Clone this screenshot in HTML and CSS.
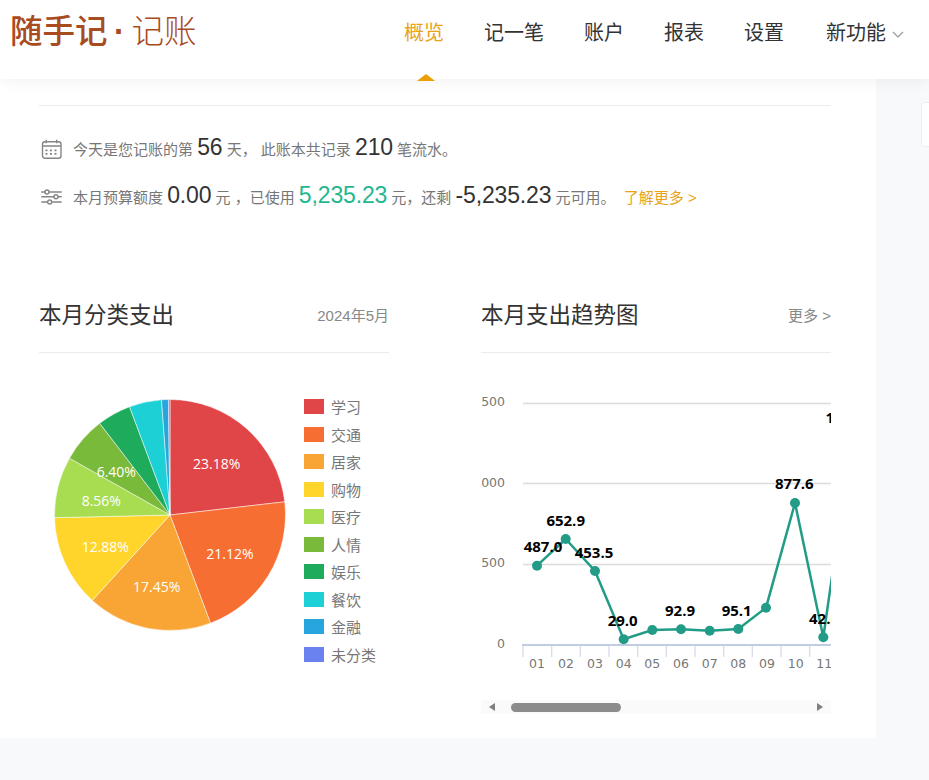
FILE: index.html
```html
<!DOCTYPE html>
<html lang="zh-CN">
<head>
    <meta charset="UTF-8">
    <meta name="viewport" content="width=device-width, initial-scale=1.0">
    <title>随手记 · 记账</title>
    <link rel="stylesheet" href="styles.css">
</head>
<body>

    <header class="header">
        <div class="logo"><span class="logo-main">随手记</span><span class="logo-dot">·</span><span class="logo-sub">记账</span></div>
        <nav class="nav">
            <a class="nav-item active">概览</a>
            <a class="nav-item">记一笔</a>
            <a class="nav-item">账户</a>
            <a class="nav-item">报表</a>
            <a class="nav-item">设置</a>
            <a class="nav-item nav-more">新功能
                <svg class="chevron" width="12" height="7" viewBox="0 0 12 7"><path d="M1 1l5 5 5-5"/></svg>
            </a>
        </nav>
    </header>

    <div class="side-tab"></div>

    <main class="panel">
        <section class="stats">
            <div class="stat-row">
                <svg class="stat-icon" width="22" height="20" viewBox="0 0 22 20">
                    <rect x="1.500" y="2.700" width="18.500" height="16.600" rx="2.500"/>
                    <path d="M1.500 7h18.500M5.200 .8v3.500M15.700 .8v3.500"/>
                    <path class="dots" d="M4.500 10.500h2v1.700h-2zM9 10.500h2v1.700H9zM13.500 10.500h2v1.700h-2zM4.500 14h2v1.700h-2zM9 14h2v1.700H9zM13.500 14h2v1.700h-2z"/>
                </svg>
                <p>今天是您记账的第 <b>56</b> 天， 此账本共记录 <b>210</b> 笔流水。</p>
            </div>
            <div class="stat-row">
                <svg class="stat-icon" width="22" height="20" viewBox="0 0 22 20">
                    <path d="M.3 5h20.400M.3 9.700h20.400M.3 15h20.400"/>
                    <circle class="knob" cx="6" cy="5" r="2"/>
                    <circle class="knob" cx="15" cy="9.700" r="2"/>
                    <circle class="knob" cx="8.700" cy="15" r="2"/>
                </svg>
                <p>本月预算额度 <b>0.00</b> 元 ，已使用 <b class="green">5,235.23</b> 元，还剩 <b>-5,235.23</b> 元可用。 <a class="more-link">了解更多 &gt;</a></p>
            </div>
        </section>

        <section class="charts">
            <div class="chart">
                <div class="chart-head">
                    <h2>本月分类支出</h2>
                    <span class="chart-note">2024年5月</span>
                </div>
                <div class="pie-wrap">
                    <svg class="pie" width="250" height="260" viewBox="39 385 250 260">
                        <path fill="#e04648" d="M170 515L170 399.500A115.500 115.500 0 0 1 284.740 501.820Z"/>
                        <path fill="#f76e32" d="M170 515L284.740 501.820A115.500 115.500 0 0 1 210.480 623.170Z"/>
                        <path fill="#f8a535" d="M170 515L210.480 623.170A115.500 115.500 0 0 1 92.270 600.430Z"/>
                        <path fill="#ffd52b" d="M170 515L92.270 600.430A115.500 115.500 0 0 1 54.530 517.690Z"/>
                        <path fill="#a8dd52" d="M170 515L54.530 517.690A115.500 115.500 0 0 1 69.450 458.160Z"/>
                        <path fill="#7aba3a" d="M170 515L69.450 458.160A115.500 115.500 0 0 1 99.730 423.340Z"/>
                        <path fill="#1eab5c" d="M170 515L99.730 423.340A115.500 115.500 0 0 1 129.580 406.800Z"/>
                        <path fill="#1dd0d6" d="M170 515L129.580 406.800A115.500 115.500 0 0 1 161.520 399.810Z"/>
                        <path fill="#26a6dc" d="M170 515L161.520 399.810A115.500 115.500 0 0 1 168.400 399.510Z"/>
                        <path fill="#6a82ee" d="M170 515L168.400 399.510A115.500 115.500 0 0 1 170 399.500Z"/>
                        <text x="216.700" y="468.500">23.18%</text>
                        <text x="230" y="558.500">21.12%</text>
                        <text x="156.700" y="591.500">17.45%</text>
                        <text x="105.300" y="551.500">12.88%</text>
                        <text x="101.300" y="505.500">8.56%</text>
                        <text x="116.300" y="476.500">6.40%</text>
                    </svg>
                    <ul class="legend">
                        <li><i class="c-study"></i>学习</li>
                        <li><i class="c-traffic"></i>交通</li>
                        <li><i class="c-home"></i>居家</li>
                        <li><i class="c-shop"></i>购物</li>
                        <li><i class="c-medical"></i>医疗</li>
                        <li><i class="c-gift"></i>人情</li>
                        <li><i class="c-fun"></i>娱乐</li>
                        <li><i class="c-food"></i>餐饮</li>
                        <li><i class="c-finance"></i>金融</li>
                        <li><i class="c-none"></i>未分类</li>
                    </ul>
                </div>
            </div>

            <div class="chart">
                <div class="chart-head">
                    <h2>本月支出趋势图</h2>
                    <a class="chart-note">更多 &gt;</a>
                </div>
                <svg class="trend" width="350" height="290" viewBox="481 385 350 290">
                    <path class="grid" d="M523 403.500H831M523 483.500H831M523 564.500H831"/>
                    <path class="ticks" d="M523 645v12M551.700 645v12M580.300 645v12M609 645v12M637.700 645v12M666.300 645v12M695 645v12M723.700 645v12M752.300 645v12M781 645v12M809.700 645v12"/>
                    <path class="axis" d="M522 645H831"/>
                    <text class="y-label" x="505" y="406">1500</text>
                    <text class="y-label" x="505" y="487">1000</text>
                    <text class="y-label" x="505" y="567">500</text>
                    <text class="y-label" x="505" y="648">0</text>
                    <text class="x-label" x="537" y="668">01</text>
                    <text class="x-label" x="566" y="668">02</text>
                    <text class="x-label" x="595" y="668">03</text>
                    <text class="x-label" x="623.700" y="668">04</text>
                    <text class="x-label" x="652.300" y="668">05</text>
                    <text class="x-label" x="681" y="668">06</text>
                    <text class="x-label" x="709.700" y="668">07</text>
                    <text class="x-label" x="738.300" y="668">08</text>
                    <text class="x-label" x="767" y="668">09</text>
                    <text class="x-label" x="795.700" y="668">10</text>
                    <text class="x-label" x="824.300" y="668">11</text>
                    <polyline class="line" points="537,565.700 565.700,539 595,571 623.700,639.300 652.300,630 681,629.300 709.700,630.700 738.300,629 766,607.700 795,503 823.300,637.300 852,437"/>
                    <g class="points">
                        <circle cx="537" cy="565.700" r="5"/>
                        <circle cx="565.700" cy="539" r="5"/>
                        <circle cx="595" cy="571" r="5"/>
                        <circle cx="623.700" cy="639.300" r="5"/>
                        <circle cx="652.300" cy="630" r="5"/>
                        <circle cx="681" cy="629.300" r="5"/>
                        <circle cx="709.700" cy="630.700" r="5"/>
                        <circle cx="738.300" cy="629" r="5"/>
                        <circle cx="766" cy="607.700" r="5"/>
                        <circle cx="795" cy="503" r="5"/>
                        <circle cx="823.300" cy="637.300" r="5"/>
                    </g>
                    <g class="values">
                        <text x="543" y="552">487.0</text>
                        <text x="565.700" y="526">652.9</text>
                        <text x="594" y="558">453.5</text>
                        <text x="622.700" y="626">29.0</text>
                        <text x="680" y="616">92.9</text>
                        <text x="736.700" y="616">95.1</text>
                        <text x="794.300" y="489">877.6</text>
                        <text x="824" y="624">42.8</text>
                        <text x="849" y="423">1647.3</text>
                    </g>
                </svg>
                <div class="scrollbar">
                    <span class="arrow arrow-left"></span>
                    <span class="thumb"></span>
                    <span class="arrow arrow-right"></span>
                </div>
            </div>
        </section>
    </main>

</body>
</html>
```

FILE: styles.css
```css
* {
    box-sizing: border-box;
}

body {
    margin: 0;
    min-height: 780px;
    background: #f8f9fb;
    font-family: "Liberation Sans", "Noto Sans CJK SC", sans-serif;
    overflow: hidden;
}

.header {
    position: relative;
    z-index: 2;
    display: flex;
    align-items: center;
    justify-content: space-between;
    height: 79px;
    padding: 0 25px 13px 10px;
    background: #fff;
    box-shadow: 0 2px 14px rgba(0, 0, 0, 0.06);
}

.logo {
    display: flex;
    align-items: center;
    margin-top: -2px;
    color: #a84b1e;
    font-size: 32.500px;
    line-height: 40px;
}

.logo-main {
    font-weight: 500;
}

.logo-dot {
    width: 24px;
    text-align: center;
    font-weight: 700;
}

.logo-sub {
    font-weight: 300;
}

.nav {
    display: flex;
    gap: 40px;
}

.nav-item {
    position: relative;
    color: #333;
    font-size: 20px;
    line-height: 28px;
}

.nav-item.active {
    color: #e8a317;
}

.nav-item.active::after {
    content: "";
    position: absolute;
    left: 50%;
    top: 55px;
    margin-left: -7px;
    border-left: 9px solid transparent;
    border-right: 9px solid transparent;
    border-bottom: 7px solid #eb9e05;
}

.nav-more {
    display: flex;
    align-items: center;
    gap: 6px;
    margin-left: 2px;
}

.chevron {
    margin-top: 3px;
    fill: none;
    stroke: #999;
    stroke-width: 1.2;
}

.side-tab {
    position: absolute;
    top: 102px;
    left: 921px;
    width: 20px;
    height: 45px;
    background: #fff;
    border: 1px solid #eeeeee;
    border-radius: 4px;
}

.panel {
    width: 876px;
    height: 659px;
    padding: 26px 45px 0 39px;
    background: #fff;
}

.stats {
    height: 115px;
    padding-top: 19px;
    border-top: 1px solid #ebebeb;
}

.stat-row {
    display: flex;
    align-items: center;
    height: 48px;
    color: #777;
    font-size: 15px;
}

.stat-row p {
    margin: 0 0 4px;
    white-space: nowrap;
}

.stat-row b {
    color: #333;
    font-size: 23px;
    font-weight: 400;
    letter-spacing: -0.15px;
}

.stat-row b.green {
    color: #1fb78f;
}

.more-link {
    margin-left: 4px;
    color: #e8a317;
}

.stat-icon {
    flex: none;
    margin: 0 10px 0 2px;
    fill: none;
    stroke: #858585;
    stroke-width: 1.4;
}

.stat-icon .dots {
    fill: #858585;
    stroke: none;
}

.stat-icon .knob {
    fill: #fff;
}

.charts {
    display: flex;
    gap: 92px;
    margin-top: 75px;
}

.chart {
    width: 350px;
}

.chart-head {
    display: flex;
    align-items: center;
    justify-content: space-between;
    height: 58px;
    padding-bottom: 19px;
    border-bottom: 1px solid #ebebeb;
}

.chart-head h2 {
    margin: -3px 0 0;
    color: #333;
    font-size: 22.500px;
    font-weight: 400;
}

.chart-note {
    color: #888;
    font-size: 15px;
}

.pie-wrap {
    display: flex;
    gap: 15px;
    margin-top: 32px;
}

.pie {
    flex: none;
}

.pie path {
    stroke: #fff;
    stroke-width: 0.5;
}

.pie text {
    fill: #fff;
    font-family: "Open Sans", sans-serif;
    font-size: 14px;
    text-anchor: middle;
}

.legend {
    margin: 14px 0 0;
    padding: 0;
    list-style: none;
    white-space: nowrap;
}

.legend li {
    display: flex;
    align-items: center;
    gap: 7px;
    height: 27.500px;
    margin-top: -6px;
    margin-bottom: 6px;
    color: #777;
    font-size: 15px;
}

.legend i {
    width: 20px;
    height: 15px;
}

.c-study { background: #e04648; }
.c-traffic { background: #f76e32; }
.c-home { background: #f8a535; }
.c-shop { background: #ffd52b; }
.c-medical { background: #a8dd52; }
.c-gift { background: #7aba3a; }
.c-fun { background: #1eab5c; }
.c-food { background: #1dd0d6; }
.c-finance { background: #26a6dc; }
.c-none { background: #6a82ee; }

.trend {
    display: block;
    margin-top: 32px;
    overflow: hidden;
}

.trend text {
    font-family: "DejaVu Sans", sans-serif;
}

.grid {
    fill: none;
    stroke: #dcdcdc;
    stroke-width: 1.500;
}

.ticks {
    fill: none;
    stroke: #d3dbe8;
    stroke-width: 1.200;
}

.axis {
    fill: none;
    stroke: #c0cde0;
    stroke-width: 2;
}

.y-label {
    fill: #777;
    font-size: 12.500px;
    text-anchor: end;
}

.x-label {
    fill: #777;
    font-size: 12.500px;
    text-anchor: middle;
}

.line {
    fill: none;
    stroke: #229c86;
    stroke-width: 2.500;
}

.points circle {
    fill: #229c86;
}

.trend .values text {
    fill: #000;
    font-family: "Open Sans", sans-serif;
    font-size: 15px;
    font-weight: 700;
    text-anchor: middle;
}

.scrollbar {
    display: flex;
    align-items: center;
    height: 14px;
    margin-top: 25px;
    padding: 0 8px;
    background: #fafafa;
}

.thumb {
    width: 110px;
    height: 9px;
    margin-left: 16px;
    background: #8c8c8c;
    border-radius: 4.500px;
}

.arrow {
    width: 0;
    height: 0;
    border-top: 4.500px solid transparent;
    border-bottom: 4.500px solid transparent;
}

.arrow-left {
    border-right: 6px solid #7f7f7f;
}

.arrow-right {
    margin-left: auto;
    margin-right: 0;
    border-left: 6px solid #7f7f7f;
}
```
